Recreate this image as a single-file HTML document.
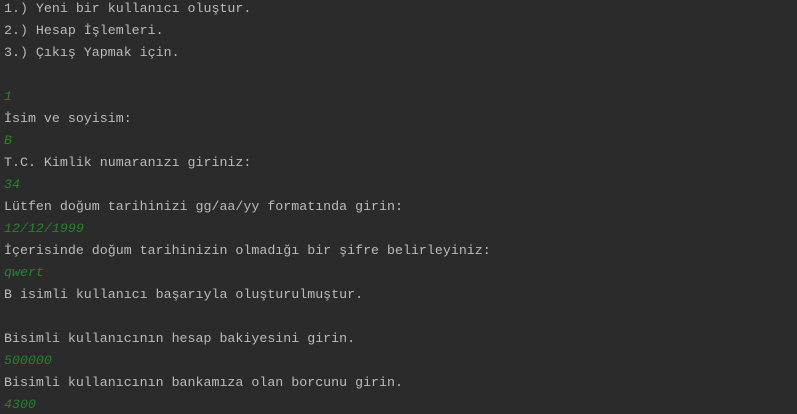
<!DOCTYPE html>
<html><head><meta charset="utf-8"><style>
html,body{margin:0;padding:0;background:#2b2b2b;width:797px;height:414px;overflow:hidden}
pre{margin:0;padding:0 0 0 4px;position:relative;top:-2px;font-family:"Liberation Mono","DejaVu Sans Mono",monospace;font-size:13.3px;line-height:22px;color:#bbbbbb}
i{color:#25852a;font-style:italic}
</style></head><body><pre>1.) Yeni bir kullanıcı oluştur.
2.) Hesap İşlemleri.
3.) Çıkış Yapmak için.

<i>1</i>
İsim ve soyisim:
<i>B</i>
T.C. Kimlik numaranızı giriniz:
<i>34</i>
Lütfen doğum tarihinizi gg/aa/yy formatında girin:
<i>12/12/1999</i>
İçerisinde doğum tarihinizin olmadığı bir şifre belirleyiniz:
<i>qwert</i>
B isimli kullanıcı başarıyla oluşturulmuştur.

Bisimli kullanıcının hesap bakiyesini girin.
<i>500000</i>
Bisimli kullanıcının bankamıza olan borcunu girin.
<i>4300</i></pre></body></html>
